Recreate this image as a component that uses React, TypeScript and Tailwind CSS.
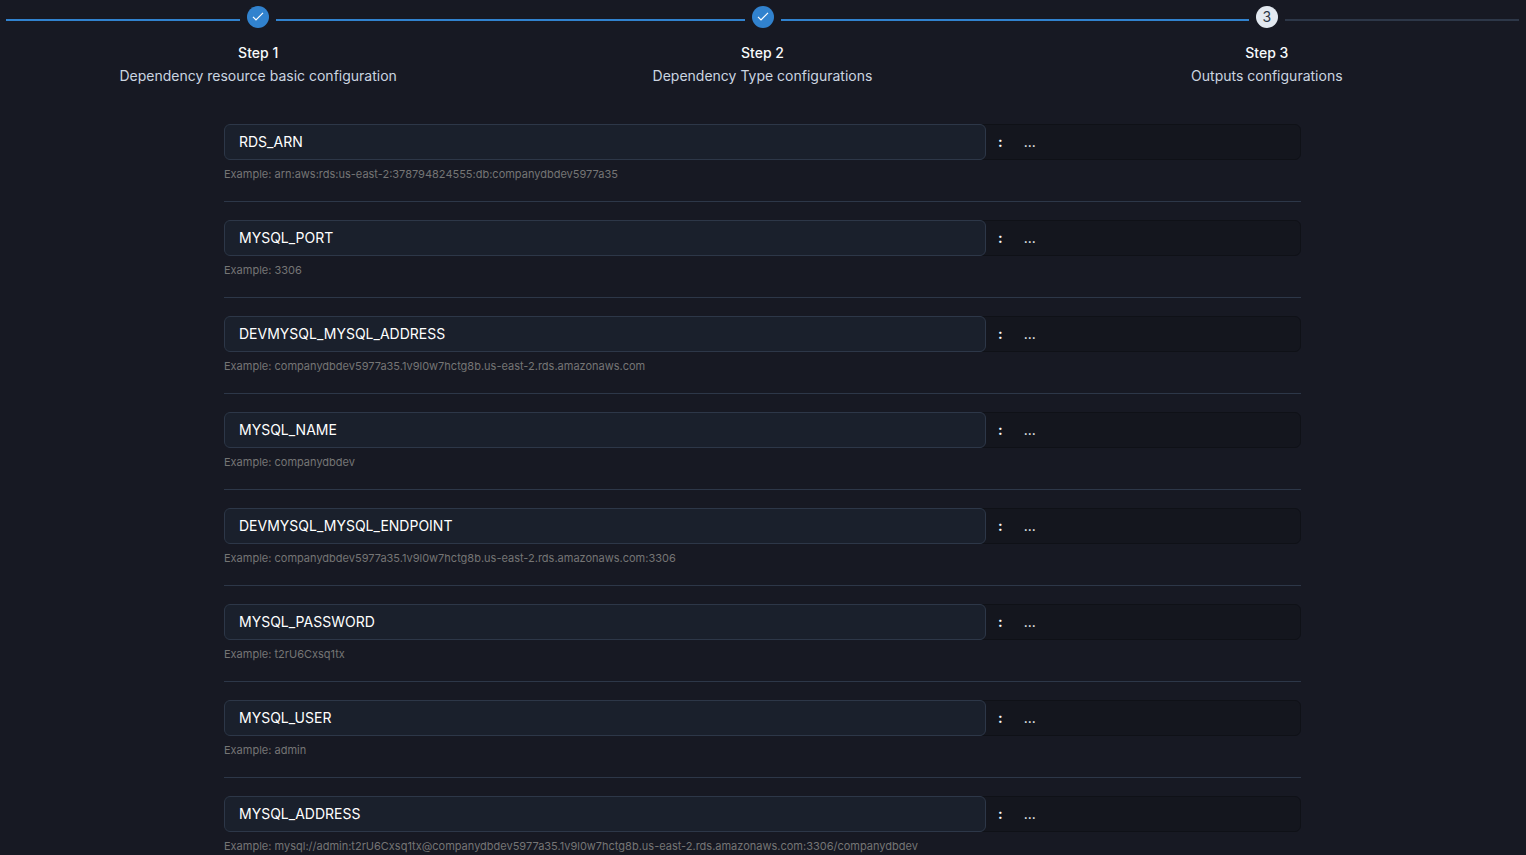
import React, { useState } from 'react';

interface Step {
  title: string;
  description: string;
}

interface Output {
  name: string;
  example: string;
}

const steps: Step[] = [
  { title: 'Step 1', description: 'Dependency resource basic configuration' },
  { title: 'Step 2', description: 'Dependency Type configurations' },
  { title: 'Step 3', description: 'Outputs configurations' }
];

const defaultOutputs: Output[] = [
  { name: 'RDS_ARN', example: 'arn:aws:rds:us-east-2:378794824555:db:companydbdev5977a35' },
  { name: 'MYSQL_PORT', example: '3306' },
  { name: 'DEVMYSQL_MYSQL_ADDRESS', example: 'companydbdev5977a35.1v9l0w7hctg8b.us-east-2.rds.amazonaws.com' },
  { name: 'MYSQL_NAME', example: 'companydbdev' },
  { name: 'DEVMYSQL_MYSQL_ENDPOINT', example: 'companydbdev5977a35.1v9l0w7hctg8b.us-east-2.rds.amazonaws.com:3306' },
  { name: 'MYSQL_PASSWORD', example: 't2rU6Cxsq1tx' },
  { name: 'MYSQL_USER', example: 'admin' },
  { name: 'MYSQL_ADDRESS', example: 'mysql://admin:t2rU6Cxsq1tx@companydbdev5977a35.1v9l0w7hctg8b.us-east-2.rds.amazonaws.com:3306/companydbdev' }
];

const CheckIcon: React.FC = () => (
  <svg width="12" height="12" viewBox="0 0 12 12" fill="none" aria-hidden="true">
    <path d="M1 5.8 4 8.8 11 1.8" stroke="currentColor" strokeWidth="1.2" />
  </svg>
);

const Stepper: React.FC<{ current: number }> = ({ current }) => (
  <ol className="grid grid-cols-3">
    {steps.map((step, index) => {
      const isDone = index < current;
      const isReached = index <= current;

      return (
        <li key={step.title} className="flex flex-col items-center">
          <div className="flex w-full gap-[7px]">
            <div className={`mt-[13px] h-0.5 flex-1 ${isReached ? 'bg-[#3182ce]' : 'bg-[#2d3748]'}`} />
            <div
              className={`
                flex size-[22px] items-center justify-center rounded-full text-sm
                ${isDone ? 'bg-[#3182ce] text-white' : 'bg-[#e2e8f0] text-[#2d3748]'}
              `}
            >
              {isDone ? <CheckIcon /> : index + 1}
            </div>
            <div className={`mt-[13px] h-0.5 flex-1 ${isDone ? 'bg-[#3182ce]' : 'bg-[#2d3748]'}`} />
          </div>
          <p className="mt-3.5 text-sm leading-[22px] font-medium text-[#f7fafc]">{step.title}</p>
          <p className="text-sm leading-6 text-[#cbd5e0]">{step.description}</p>
        </li>
      );
    })}
  </ol>
);

const OutputRow: React.FC<{ output: Output; onRename: (name: string) => void }> = ({ output, onRename }) => (
  <div className="border-b border-[#2d3748] pb-[18px] last:border-b-0">
    <div className="flex h-9 rounded-md border border-[#0f1117] bg-[#14161e]">
      <input
        type="text"
        value={output.name}
        onChange={(e) => onRename(e.target.value)}
        aria-label="Output name"
        className="-m-px min-w-0 flex-1 rounded-md border border-[#2d3748] bg-[#1a202c] px-3.5 text-sm text-white outline-none focus:border-[#3182ce]"
      />
      <div className="flex w-[315px] items-center gap-[21px] pl-[13px] text-sm text-[#f7fafc]">
        <span className="font-bold">:</span>
        <span>...</span>
      </div>
    </div>
    <p className="mt-1.5 text-[11px] leading-[17px] text-[#757575]">Example: {output.example}</p>
  </div>
);

export default function App() {
  const [outputs, setOutputs] = useState<Output[]>(defaultOutputs);

  const handleRename = (index: number, name: string) => {
    setOutputs(outputs.map((output, i) => (i === index ? { ...output, name } : output)));
  };

  return (
    <div className="h-screen overflow-hidden bg-[#171923] pt-1.5 pr-[7px] pl-1.5 font-['Inter',sans-serif]">
      <Stepper current={2} />
      <form className="mx-auto mt-9 flex w-full max-w-[1077px] flex-col gap-[18px]">
        {outputs.map((output, index) => (
          <OutputRow
            key={index}
            output={output}
            onRename={(name) => handleRename(index, name)}
          />
        ))}
      </form>
    </div>
  );
}
